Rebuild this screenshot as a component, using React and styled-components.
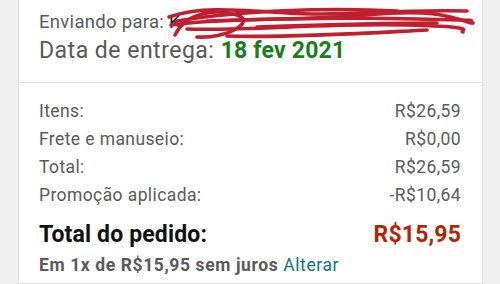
import React from 'react';
import styled, { createGlobalStyle } from 'styled-components';

const GlobalStyle = createGlobalStyle`
  html, body {
    margin: 0;
    padding: 0;
    background: #efefef;
    font-family: Roboto, "Liberation Sans", sans-serif;
    overflow: hidden;
  }
`;

const Page = styled.div`
  width: 500px;
  height: 284px;
  padding: 0 17px 0 18px;
  box-sizing: border-box;
`;

const Card = styled.div`
  background: #fff;
  border: 1px solid #e2e2e2;
  border-top: none;
  height: 100%;
  box-sizing: border-box;
`;

const Section = styled.div`
  padding: ${props => props.pad};
  border-top: ${props => (props.divided ? '1px solid #e4e4e4' : 'none')};
`;

const ShipTo = styled.div`
  font-size: 18.5px;
  line-height: 25px;
  letter-spacing: 0.3px;
  color: #5a5a5a;
  white-space: nowrap;
`;

const Recipient = styled.span`
  position: relative;
  display: inline-block;
  width: 300px;
  color: #222;
`;

const Scribble = styled.svg`
  position: absolute;
  left: -2px;
  top: -5px;
  overflow: visible;
`;

const Delivery = styled.div`
  font-size: 23px;
  line-height: 32px;
  letter-spacing: 0.5px;
  color: #5a5a5a;
`;

const DeliveryDate = styled.span`
  color: #1a7d1a;
  font-weight: 700;
  letter-spacing: 0.2px;
`;

const Row = styled.div`
  display: flex;
  justify-content: space-between;
  font-size: 17.5px;
  line-height: 28px;
  letter-spacing: 0.4px;
  color: #5a5a5a;
`;

const TotalRow = styled.div`
  display: flex;
  justify-content: space-between;
  margin-top: 11px;
  font-size: 23px;
  line-height: 30px;
  font-weight: 700;
  letter-spacing: 0.15px;
  color: #111;
`;

const TotalValue = styled.span`
  color: #b12704;
`;

const Installment = styled.div`
  margin-top: 2px;
  font-size: 17.5px;
  line-height: 26px;
  font-weight: 700;
  letter-spacing: 0.6px;
  color: #5a5a5a;
`;

const ChangeLink = styled.span`
  font-weight: 400;
  color: #0f7480;
`;

const lines = [
  ['Itens:', 'R$26,59'],
  ['Frete e manuseio:', 'R$0,00'],
  ['Total:', 'R$26,59'],
  ['Promoção aplicada:', '-R$10,64'],
];

// red pen strokes hiding the recipient name
const RedScribble = () => (
  <Scribble width="310" height="34" viewBox="0 0 310 34">
    <g fill="none" stroke="#bf1f2e" strokeLinecap="round" strokeWidth="3.6">
      <path d="M2 12 C 30 2, 60 4, 120 8 S 220 4, 300 6" />
      <path d="M4 20 C 60 12, 140 16, 200 10 S 280 10, 304 18" />
      <path d="M8 30 C 20 6, 50 4, 70 10 S 60 34, 30 32" />
      <path d="M20 24 C 80 26, 160 18, 240 20 S 290 26, 296 27" />
      <path d="M40 16 C 100 14, 180 12, 250 14 S 300 14, 306 18" />
      <path d="M60 31 C 120 33, 200 28, 260 25" />
      <path d="M10 16 C 70 6, 160 2, 230 6" />
      <path d="M90 22 C 150 20, 210 18, 270 18" />
    </g>
  </Scribble>
);

export default function App() {
  return (
    <>
      <GlobalStyle />
      <Page>
        <Card>
          <Section pad="10px 21px 15px 20px">
            <ShipTo>
              Enviando para:{' '}
              <Recipient>
                K
                <RedScribble />
              </Recipient>
            </ShipTo>
            <Delivery>
              Data de entrega: <DeliveryDate>18 fev 2021</DeliveryDate>
            </Delivery>
          </Section>
          <Section divided pad="14px 21px 0 20px">
            {lines.map(([label, value]) => (
              <Row key={label}>
                <span>{label}</span>
                <span>{value}</span>
              </Row>
            ))}
            <TotalRow>
              <span>Total do pedido:</span>
              <TotalValue>R$15,95</TotalValue>
            </TotalRow>
            <Installment>
              Em 1x de R$15,95 sem juros <ChangeLink>Alterar</ChangeLink>
            </Installment>
          </Section>
        </Card>
      </Page>
    </>
  );
}
